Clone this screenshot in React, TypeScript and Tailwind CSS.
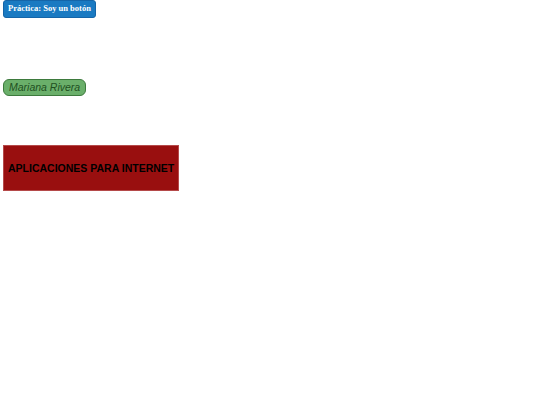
export default function App() {
  return (
    <div className="flex min-h-screen flex-col items-start bg-white pl-[3px]">
      <button className="flex h-[18px] items-center rounded-[3px] border border-[#1565a8] bg-[#1a7ac2] px-[4px] pb-[1px] font-['Liberation_Serif',serif] text-[8.5px] font-bold leading-none text-white">
        Práctica: Soy un botón
      </button>
      <span className="mt-[61px] flex h-[17px] items-center rounded-[6px] border border-[#3d7a3d] bg-[#6aaf6a] px-[5px] font-['Liberation_Sans',sans-serif] text-[10.5px] italic leading-none text-[#1f4f1f]">
        Mariana Rivera
      </span>
      <div className="mt-[49px] flex h-[46px] w-[176px] items-center whitespace-nowrap border border-[#b54a4a] bg-[#990f0f] px-[4px] font-['Liberation_Sans',sans-serif] text-[10.5px] font-bold leading-none text-black">
        APLICACIONES PARA INTERNET
      </div>
    </div>
  );
}
